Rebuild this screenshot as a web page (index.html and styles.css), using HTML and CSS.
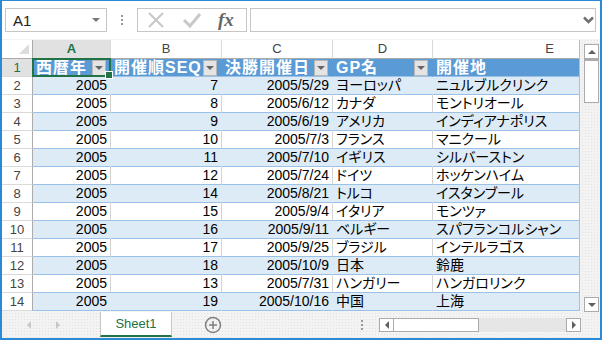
FILE: index.html
```html
<!DOCTYPE html>
<html lang="ja">
<head>
  <meta charset="UTF-8" />
  <title>Sheet1 - Excel</title>
  <link rel="stylesheet" href="styles.css">
</head>
<body>
  <div class="window">
    <div class="formula-bar">
      <div class="name-box"><span>A1</span><span class="caret"></span></div>
      <div class="vdots"><i></i><i></i><i></i></div>
      <div class="fx-buttons">
        <svg class="ico-x" width="18" height="16" viewBox="0 0 18 16"><path d="M2 1 L16 15 M16 1 L2 15" stroke="#c8c8c8" stroke-width="2"/></svg>
        <svg class="ico-ok" width="20" height="16" viewBox="0 0 20 16"><path d="M2 8 L8 14 L18 2" stroke="#c8c8c8" stroke-width="3" fill="none"/></svg>
        <span class="fx">fx</span>
      </div>
      <div class="formula-input">
        <svg width="11" height="8" viewBox="0 0 11 8"><path d="M1 1.5 L5.5 6 L10 1.5" stroke="#707070" stroke-width="2.5" fill="none"/></svg>
      </div>
    </div>

    <div class="sheet-area">
      <div class="grid">
        <div class="row col-heads">
          <div class="ch corner"><span class="corner-tri"></span></div>
          <div class="ch sel">A</div>
          <div class="ch">B</div>
          <div class="ch">C</div>
          <div class="ch">D</div>
          <div class="ch">E</div>
        </div>
        <div class="row thead">
          <div class="rh sel">1</div>
          <div class="c a1">西暦年<span class="fb"><i></i></span></div>
          <div class="c">開催順SEQ<span class="fb"><i></i></span></div>
          <div class="c">決勝開催日<span class="fb"><i></i></span></div>
          <div class="c">GP名<span class="fb"><i></i></span></div>
          <div class="c">開催地<span class="fb"><i></i></span></div>
        </div>
        <div class="row band"><div class="rh">2</div><div class="c num">2005</div><div class="c num">7</div><div class="c num">2005/5/29</div><div class="c">ヨーロッパ</div><div class="c">ニュルブルクリンク</div></div>
        <div class="row"><div class="rh">3</div><div class="c num">2005</div><div class="c num">8</div><div class="c num">2005/6/12</div><div class="c">カナダ</div><div class="c">モントリオール</div></div>
        <div class="row band"><div class="rh">4</div><div class="c num">2005</div><div class="c num">9</div><div class="c num">2005/6/19</div><div class="c">アメリカ</div><div class="c">インディアナポリス</div></div>
        <div class="row"><div class="rh">5</div><div class="c num">2005</div><div class="c num">10</div><div class="c num">2005/7/3</div><div class="c">フランス</div><div class="c">マニクール</div></div>
        <div class="row band"><div class="rh">6</div><div class="c num">2005</div><div class="c num">11</div><div class="c num">2005/7/10</div><div class="c">イギリス</div><div class="c">シルバーストン</div></div>
        <div class="row"><div class="rh">7</div><div class="c num">2005</div><div class="c num">12</div><div class="c num">2005/7/24</div><div class="c">ドイツ</div><div class="c">ホッケンハイム</div></div>
        <div class="row band"><div class="rh">8</div><div class="c num">2005</div><div class="c num">14</div><div class="c num">2005/8/21</div><div class="c">トルコ</div><div class="c">イスタンブール</div></div>
        <div class="row"><div class="rh">9</div><div class="c num">2005</div><div class="c num">15</div><div class="c num">2005/9/4</div><div class="c">イタリア</div><div class="c">モンツァ</div></div>
        <div class="row band"><div class="rh">10</div><div class="c num">2005</div><div class="c num">16</div><div class="c num">2005/9/11</div><div class="c">ベルギー</div><div class="c">スパフランコルシャン</div></div>
        <div class="row"><div class="rh">11</div><div class="c num">2005</div><div class="c num">17</div><div class="c num">2005/9/25</div><div class="c">ブラジル</div><div class="c">インテルラゴス</div></div>
        <div class="row band"><div class="rh">12</div><div class="c num">2005</div><div class="c num">18</div><div class="c num">2005/10/9</div><div class="c">日本</div><div class="c">鈴鹿</div></div>
        <div class="row"><div class="rh">13</div><div class="c num">2005</div><div class="c num">13</div><div class="c num">2005/7/31</div><div class="c">ハンガリー</div><div class="c">ハンガロリンク</div></div>
        <div class="row band"><div class="rh">14</div><div class="c num">2005</div><div class="c num">19</div><div class="c num">2005/10/16</div><div class="c">中国</div><div class="c">上海</div></div>
      </div>
      <div class="vscroll">
        <div class="sb-btn"><span class="tri-up"></span></div>
        <div class="v-thumb"></div>
        <div class="v-track"></div>
        <div class="sb-btn"><span class="tri-down"></span></div>
      </div>
    </div>

    <div class="tab-bar">
      <div class="tab-nav">
        <span class="nav-btn"><span class="tri-left light"></span></span>
        <span class="nav-btn"><span class="tri-right light"></span></span>
      </div>
      <div class="sheet-tab">Sheet1</div>
      <svg class="add-sheet" width="18" height="18" viewBox="0 0 18 18"><circle cx="9" cy="9" r="7.5" fill="none" stroke="#808080" stroke-width="1.5"/><path d="M9 5v8M5 9h8" stroke="#808080" stroke-width="1.5"/></svg>
      <div class="vdots tab-dots"><i></i><i></i><i></i></div>
      <div class="hscroll">
        <div class="sb-btn h"><span class="tri-left"></span></div>
        <div class="h-thumb"></div>
        <div class="h-track"></div>
        <div class="sb-btn h"><span class="tri-right"></span></div>
      </div>
    </div>
  </div>
</body>
</html>
```

FILE: styles.css
```css
* {
  box-sizing: border-box;
}
body {
  margin: 0;
  font-family: "Liberation Sans", "Noto Sans CJK JP", sans-serif;
  background: #fff;
}
.window {
  width: 602px;
  height: 340px;
  border: 2px solid #2b8ad8;
  border-top-width: 1px;
  display: flex;
  flex-direction: column;
  overflow: hidden;
  background: #fff;
}

/* formula bar */
.formula-bar {
  height: 38px;
  display: flex;
  align-items: flex-start;
  padding: 7px 0 0 3px;
}
.name-box {
  width: 102px;
  height: 24px;
  border: 1px solid #c6c6c6;
  display: flex;
  align-items: center;
  justify-content: space-between;
  padding: 0 6px 0 7px;
  font-size: 15px;
  color: #222;
}
.caret {
  width: 0;
  height: 0;
  border-left: 4px solid transparent;
  border-right: 4px solid transparent;
  border-top: 4px solid #777;
}
.vdots {
  margin-left: 14px;
  margin-top: 7px;
  display: flex;
  flex-direction: column;
  gap: 2px;
}
.vdots i {
  display: block;
  width: 2px;
  height: 2px;
  background: #9a9a9a;
}
.fx-buttons {
  margin-left: 14px;
  width: 110px;
  height: 24px;
  border: 1px solid #c6c6c6;
  display: flex;
  align-items: center;
}
.ico-x {
  margin-left: 9px;
}
.ico-ok {
  margin-left: 17px;
}
.fx {
  margin-left: 16px;
  font-family: "Liberation Serif", serif;
  font-style: italic;
  font-weight: bold;
  font-size: 19px;
  color: #666;
  line-height: 20px;
}
.formula-input {
  margin-left: 3px;
  width: 346px;
  height: 24px;
  border: 1px solid #c6c6c6;
  display: flex;
  align-items: center;
  justify-content: flex-end;
  padding-right: 1px;
}

/* sheet */
.sheet-area {
  height: 273px;
  display: flex;
  padding-top: 1px;
  background-color: #f3f3f3;
  background-image: radial-gradient(#e2e2e2 35%, transparent 40%);
  background-size: 3px 3px;
}
.grid {
  width: 578px;
  height: 271px;
  background: #fff;
  border-right: 1px solid #bcbcbc;
  overflow: hidden;
}
.row {
  display: grid;
  grid-template-columns: 31px 78px 111px 111px 100px 234px;
  height: 18px;
}
.col-heads {
  height: 19px;
}
.ch {
  border-right: 1px solid #dadada;
  border-bottom: 1px solid #ababab;
  text-align: center;
  font-size: 13px;
  line-height: 18px;
  color: #444;
}
.ch.sel {
  background: #e1e1e1;
  color: #217346;
  font-weight: bold;
}
.corner {
  display: flex;
  justify-content: flex-end;
  align-items: flex-end;
  padding: 0 3px 4px 0;
  border-right-color: #ababab;
}
.corner-tri {
  width: 0;
  height: 0;
  border-left: 10px solid transparent;
  border-bottom: 10px solid #dcdcdc;
}
.rh {
  border-right: 1px solid #ababab;
  border-bottom: 1px solid #dadada;
  text-align: center;
  font-size: 13px;
  line-height: 17px;
  color: #444;
}
.rh.sel {
  background: #e1e1e1;
  color: #217346;
}
.c {
  border-right: 1px solid #d4d4d4;
  border-bottom: 1px solid #9bc2e6;
  padding: 0 3px;
  font-size: 14px;
  line-height: 17px;
  color: #000;
  white-space: nowrap;
  overflow: hidden;
  font-feature-settings: "palt";
}
.num {
  text-align: right;
}
.band .c {
  background: #ddebf7;
  border-right-color: #ddebf7;
}
.thead .c {
  background: #5b9bd5;
  border-right-color: #5b9bd5;
  color: #fff;
  font-weight: bold;
  font-size: 16px;
  letter-spacing: 1px;
  display: flex;
  align-items: center;
  overflow: visible;
  font-feature-settings: normal;
}
.fb {
  margin-left: auto;
  margin-right: 1px;
  width: 14px;
  height: 16px;
  background: #e4e4e4;
  border: 1px solid #b8b8b8;
  display: flex;
  align-items: center;
  justify-content: center;
}
.fb i {
  width: 0;
  height: 0;
  border-left: 4px solid transparent;
  border-right: 4px solid transparent;
  border-top: 4px solid #666;
}
.a1 {
  position: relative;
  z-index: 2;
}
.a1::after {
  content: "";
  position: absolute;
  left: -1px;
  top: -1px;
  right: -1px;
  bottom: -1px;
  border: 2px solid #217346;
}
.a1::before {
  content: "";
  position: absolute;
  right: -3px;
  bottom: -3px;
  width: 6px;
  height: 6px;
  background: #217346;
  border: 1px solid #fff;
  z-index: 1;
}

/* scrollbars */
.vscroll {
  margin: 4px 0 0 4px;
  width: 15px;
  height: 268px;
  display: flex;
  flex-direction: column;
}
.sb-btn {
  height: 15px;
  border: 1px solid #ababab;
  background: #fff;
  display: flex;
  align-items: center;
  justify-content: center;
}
.v-thumb {
  height: 44px;
  border: 1px solid #ababab;
  border-top-width: 2px;
  background: #fff;
}
.v-track {
  flex: 1;
}
.tri-up,
.tri-down {
  width: 0;
  height: 0;
  border-left: 4px solid transparent;
  border-right: 4px solid transparent;
}
.tri-up {
  border-bottom: 4px solid #606060;
}
.tri-down {
  border-top: 4px solid #606060;
}
.tri-left,
.tri-right {
  width: 0;
  height: 0;
  border-top: 4px solid transparent;
  border-bottom: 4px solid transparent;
}
.tri-left {
  border-right: 4px solid #606060;
}
.tri-right {
  border-left: 4px solid #606060;
}
.tri-left.light {
  border-right-color: #c8c8c8;
}
.tri-right.light {
  border-left-color: #c8c8c8;
}

/* sheet tabs */
.tab-bar {
  height: 26px;
  display: flex;
  align-items: center;
  background-color: #f3f3f3;
  background-image: radial-gradient(#e2e2e2 35%, transparent 40%);
  background-size: 3px 3px;
}
.tab-nav {
  width: 98px;
  display: flex;
  gap: 15px;
  padding-left: 20px;
}
.nav-btn {
  width: 14px;
  height: 14px;
  display: flex;
  align-items: center;
  justify-content: center;
}
.sheet-tab {
  align-self: flex-start;
  width: 72px;
  height: 25px;
  background: #fff;
  border-left: 1px solid #c6c6c6;
  border-right: 1px solid #c6c6c6;
  border-bottom: 2px solid #217346;
  color: #217346;
  font-size: 13px;
  line-height: 23px;
  text-align: center;
}
.add-sheet {
  margin-left: 32px;
}
.tab-dots {
  margin: 0 0 0 139px;
}
.hscroll {
  margin-left: 16px;
  width: 202px;
  height: 14px;
  display: flex;
}
.sb-btn.h {
  width: 15px;
  height: 14px;
}
.h-thumb {
  width: 85px;
  border: 1px solid #ababab;
  border-left: none;
  background: #fff;
}
.h-track {
  flex: 1;
  background: #e6e6e6;
}
```
